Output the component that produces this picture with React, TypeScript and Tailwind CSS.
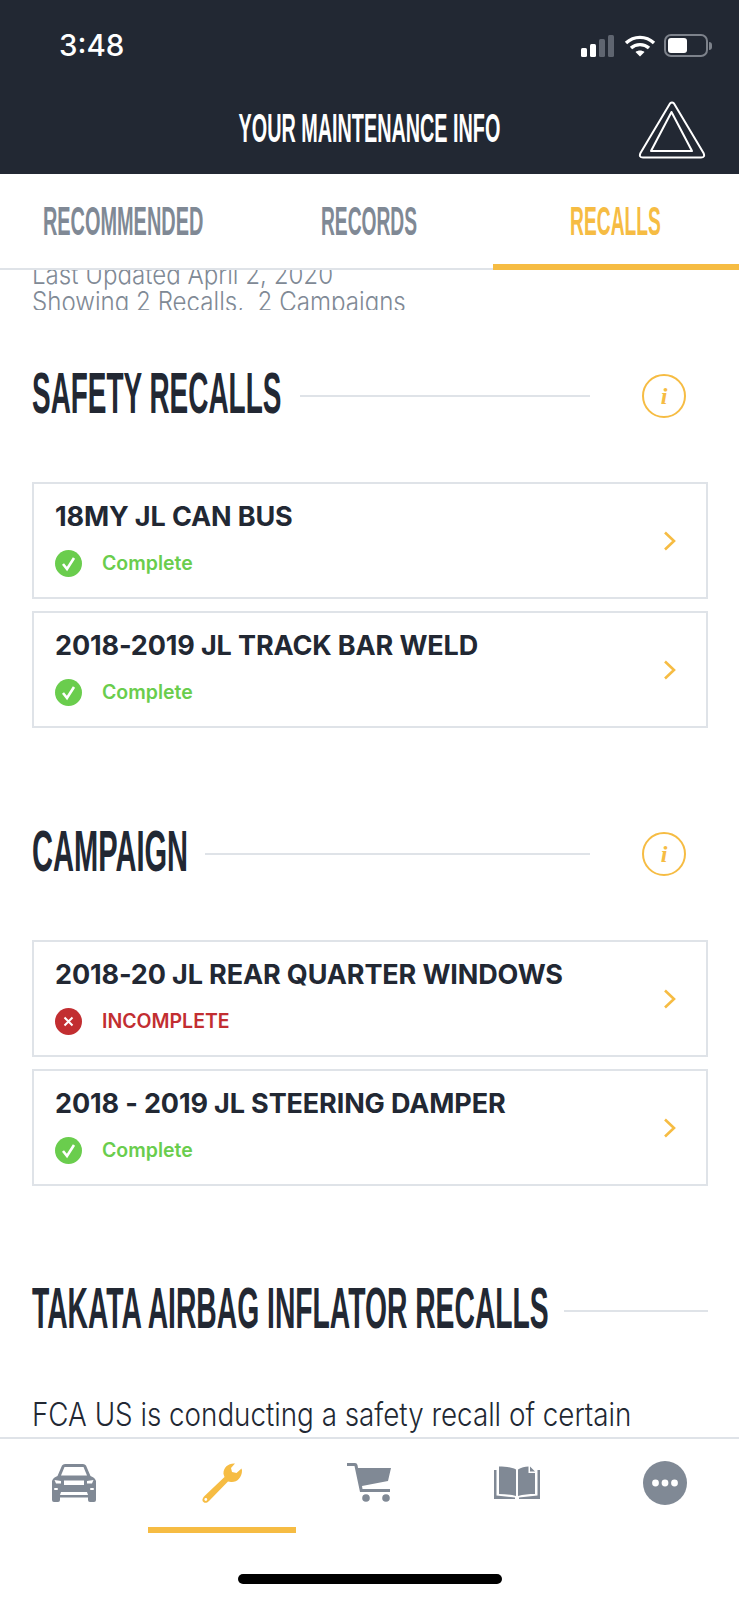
const NARROW = "font-['Liberation_Sans',sans-serif] font-bold whitespace-nowrap";

function Triangle() {
  return (
    <svg width="68" height="58" viewBox="0 0 68 58" fill="none" stroke="#fff" strokeWidth="2" strokeLinejoin="round">
      <path d="M32 2.5 Q34 0.5 36 2.5 L65.5 52 Q67.5 56.5 63 56.5 L5 56.5 Q0.5 56.5 2.5 52 Z" />
      <path d="M33.5 11 L54 50 L13 50 Z" />
    </svg>
  );
}

function StatusIcons() {
  return (
    <div className="flex items-center">
      <svg width="34" height="22" viewBox="0 0 34 22">
        <rect x="0" y="13" width="6" height="9" rx="1.5" fill="#fff" />
        <rect x="9" y="9" width="6" height="13" rx="1.5" fill="#fff" />
        <rect x="18" y="4" width="6" height="18" rx="1.5" fill="#5f6570" />
        <rect x="27" y="0" width="6" height="22" rx="1.5" fill="#5f6570" />
      </svg>
      <svg className="ml-[9px]" width="32" height="22" viewBox="0 0 32 22" fill="none" stroke="#fff" strokeWidth="3.4">
        <path d="M2 8 C10 0.5 22 0.5 30 8" />
        <path d="M7 13 C12 8.5 20 8.5 25 13" />
        <path d="M16 21.5 L11.5 17 C14 15 18 15 20.5 17 Z" fill="#fff" stroke="none" />
      </svg>
      <div className="ml-[8px] flex items-center">
        <div className="w-[44px] h-[23px] rounded-[7px] border-2 border-[#7d828b] p-[2px]">
          <div className="w-[19px] h-full rounded-[3px] bg-white" />
        </div>
        <div className="ml-[1px] w-[3px] h-[8px] rounded-r-full bg-[#7d828b]" />
      </div>
    </div>
  );
}

function InfoIcon() {
  return (
    <div className="w-[44px] h-[44px] rounded-full border-2 border-[#f6bc43] flex items-center justify-center text-[#f6bc43] font-['Liberation_Serif',serif] italic font-bold text-[24px] leading-none">
      i
    </div>
  );
}

function Check() {
  return (
    <svg width="27" height="27" viewBox="0 0 27 27">
      <circle cx="13.5" cy="13.5" r="13.5" fill="#6acd4d" />
      <path d="M8 14 L12 19 L19 8" fill="none" stroke="#fff" strokeWidth="2.6" />
    </svg>
  );
}

function Cross() {
  return (
    <svg width="27" height="27" viewBox="0 0 27 27">
      <circle cx="13.5" cy="13.5" r="13.5" fill="#c22e31" />
      <path d="M9.5 9.5 L17.5 17.5 M17.5 9.5 L9.5 17.5" fill="none" stroke="#fff" strokeWidth="2" />
    </svg>
  );
}

function Card({ title, ok }: { title: string; ok: boolean }) {
  return (
    <div className="h-[117px] border-2 border-[#dfe3e8] flex items-center justify-between pl-[21px] pr-[30px]">
      <div className="flex flex-col">
        <div className="h-[32px] leading-[32px] text-[27px] font-bold text-[#222833] font-['Inter',sans-serif] tracking-[-0.13px] whitespace-nowrap -mt-[3px]">
          {title}
        </div>
        <div className="mt-[17px] flex items-center h-[27px]">
          {ok ? <Check /> : <Cross />}
          <span
            className={
              ok
                ? "ml-[20px] text-[19.5px] font-semibold text-[#6acd4d] font-['Inter',sans-serif]"
                : "ml-[20px] text-[19.5px] font-semibold text-[#c22e31] font-['Inter',sans-serif]"
            }
          >
            {ok ? "Complete" : "INCOMPLETE"}
          </span>
        </div>
      </div>
      <svg width="13" height="20" viewBox="0 0 13 20" fill="none" stroke="#f6bc43" strokeWidth="2.6">
        <path d="M2 1.5 L11 10 L2 18.5" />
      </svg>
    </div>
  );
}

function CarIcon() {
  return (
    <svg width="44" height="38" viewBox="0 0 44 38" fill="#808995">
      <path d="M10 1.5 Q11 0 13 0 L31 0 Q33 0 34 1.5 L38.5 12 Q43 13.5 44 17 L44 36 Q44 38 42 38 L38 38 Q36 38 36 36 L36 33.5 L8 33.5 L8 36 Q8 38 6 38 L2 38 Q0 38 0 36 L0 17 Q1 13.5 5.5 12 Z" />
      <path d="M12.5 3 L31.5 3 L35 11.5 L9 11.5 Z" fill="#fff" />
      <rect x="12" y="16.5" width="20" height="4.5" fill="#fff" />
      <path d="M2.5 16 L9 17 L9 19.5 L4 19.5 Z" fill="#fff" />
      <path d="M41.5 16 L35 17 L35 19.5 L40 19.5 Z" fill="#fff" />
      <rect x="2" y="24" width="4" height="2" rx="1" fill="#fff" />
      <rect x="38" y="24" width="4" height="2" rx="1" fill="#fff" />
      <path d="M9 28 L35 28 L36 31 L8 31 Z" fill="#fff" />
    </svg>
  );
}

function WrenchIcon() {
  return (
    <svg width="40" height="40" viewBox="0 0 40 40" fill="#f6bc43">
      <path d="M33 0.5 C26 0 21 5 21.5 11 L22.5 14 L2 33.5 C0 36 0 38 1.5 39 C3 40.5 5 40 7 38 L26 18.5 L29 19 C35 19.5 40 14.5 40 7.5 L39.5 5.5 L34.5 10 L30 9 L29 5 Z" />
      <circle cx="3.8" cy="36.5" r="1.4" fill="#fff" />
    </svg>
  );
}

function CartIcon() {
  return (
    <svg width="44" height="39" viewBox="0 0 44 39" fill="#808995">
      <path d="M0 0 L8 0 Q10 0 10.5 2 L11 5 L44 5 L41 18 L15 23 L15.5 26 L43 26 L43 29 L13 29 L7.5 3 L0 3 Z" />
      <circle cx="19" cy="35" r="3.8" />
      <circle cx="39" cy="35" r="3.8" />
    </svg>
  );
}

function BookIcon() {
  return (
    <svg width="46" height="33" viewBox="0 0 46 33" fill="#808995">
      <path d="M0 4 L2.5 4 L2.5 29.5 L21 31.5 L21 33 L0 33 Z" />
      <path d="M46 4 L43.5 4 L43.5 29.5 L25 31.5 L25 33 L46 33 Z" />
      <path d="M5 0.5 C11 0.5 17 1 22 3.5 L22 30 C17 28.5 11 28 5 28 Z" />
      <path d="M24 3.5 C27 1.5 31 0.5 34.5 0.5 L34.5 7 L41 7 L41 28 C35 28 29 28.5 24 30 Z" />
      <path d="M36 0.5 L41 5.5 L36 5.5 Z" />
    </svg>
  );
}

function MoreIcon() {
  return (
    <svg width="44" height="44" viewBox="0 0 44 44">
      <circle cx="22" cy="22" r="22" fill="#808995" />
      <circle cx="12.5" cy="22" r="3.4" fill="#fff" />
      <circle cx="22" cy="22" r="3.4" fill="#fff" />
      <circle cx="31.5" cy="22" r="3.4" fill="#fff" />
    </svg>
  );
}

export default function App() {
  return (
    <div className="w-[739px] h-[1600px] bg-white flex flex-col overflow-hidden">
      <header className="h-[174px] shrink-0 bg-[#222833] flex flex-col">
        <div className="h-[102px] flex items-start justify-between pl-[59px] pr-[27px] pt-[25px]">
          <span className="text-[29.5px] leading-[40px] font-medium text-white font-['Inter',sans-serif]">3:48</span>
          <div className="pt-[9px]">
            <StatusIcons />
          </div>
        </div>
        <div className="grid grid-cols-[1fr_auto_1fr] items-start px-[33px]">
          <div />
          <div className="w-[261px] h-[46px] mt-[3px] flex items-center justify-center">
            <span className={`${NARROW} text-[40px] leading-[46px] text-white scale-x-[0.495]`}>YOUR MAINTENANCE INFO</span>
          </div>
          <div className="justify-self-end -mt-[1px]">
            <Triangle />
          </div>
        </div>
      </header>

      <nav className="h-[96px] shrink-0 grid grid-cols-3">
        <div className="border-b-2 border-[#dfe3e8] flex items-center justify-center overflow-hidden">
          <span className={`${NARROW} text-[40px] text-[#808995] scale-x-[0.498]`}>RECOMMENDED</span>
        </div>
        <div className="border-b-2 border-[#dfe3e8] flex items-center justify-center overflow-hidden">
          <span className={`${NARROW} text-[40px] text-[#808995] scale-x-[0.48]`}>RECORDS</span>
        </div>
        <div className="border-b-[6px] border-[#f6bc43] flex items-center justify-center overflow-hidden pt-[4px]">
          <span className={`${NARROW} text-[40px] text-[#f6bc43] scale-x-[0.48]`}>RECALLS</span>
        </div>
      </nav>

      <main className="flex-1 min-h-0 overflow-hidden pl-[32px] pr-[31px]">
        <div className="h-[40px] overflow-hidden">
          <div className="-mt-[9px] font-['Inter',sans-serif] font-light text-[27px] leading-[27px] text-[#808995] whitespace-nowrap origin-left scale-x-[0.893]">
            <div>Last Updated April 2, 2020</div>
            <div>Showing 2 Recalls,&nbsp; 2 Campaigns</div>
          </div>
        </div>

        <section className="mt-[56px] h-[60px] flex items-center">
          <div className="w-[251px] shrink-0">
            <div className={`${NARROW} text-[57px] leading-[60px] text-[#222833] origin-left scale-x-[0.49] -translate-y-[3px]`}>SAFETY RECALLS</div>
          </div>
          <div className="ml-[17px] flex-1 h-[2px] bg-[#dfe3e8]" />
          <div className="ml-[52px] mr-[22px]">
            <InfoIcon />
          </div>
        </section>
        <div className="mt-[56px] flex flex-col gap-[12px]">
          <Card title="18MY JL CAN BUS" ok />
          <Card title="2018-2019 JL TRACK BAR WELD" ok />
        </div>

        <section className="mt-[96px] h-[60px] flex items-center">
          <div className="w-[155px] shrink-0">
            <div className={`${NARROW} text-[57px] leading-[60px] text-[#222833] origin-left scale-x-[0.51] -translate-y-[3px]`}>CAMPAIGN</div>
          </div>
          <div className="ml-[18px] flex-1 h-[2px] bg-[#dfe3e8]" />
          <div className="ml-[52px] mr-[22px]">
            <InfoIcon />
          </div>
        </section>
        <div className="mt-[56px] flex flex-col gap-[12px]">
          <Card title="2018-20 JL REAR QUARTER WINDOWS" ok={false} />
          <Card title="2018 - 2019 JL STEERING DAMPER" ok />
        </div>

        <section className="mt-[95px] h-[60px] flex items-center">
          <div className="w-[516px] shrink-0">
            <div className={`${NARROW} text-[57px] leading-[60px] text-[#222833] origin-left scale-x-[0.496] -translate-y-[3px]`}>TAKATA AIRBAG INFLATOR RECALLS</div>
          </div>
          <div className="ml-[16px] flex-1 h-[2px] bg-[#dfe3e8]" />
        </section>
        <p className="mt-[52px] font-['Inter',sans-serif] font-light text-[32px] leading-[44px] text-[#222833] whitespace-nowrap origin-left scale-x-[0.868]">
          FCA US is conducting a safety recall of certain
        </p>
      </main>

      <footer className="h-[163px] shrink-0 border-t-2 border-[#dfe3e8]">
        <div className="h-[94px] grid grid-cols-5">
          <div className="flex justify-center items-start pt-[25px]"><CarIcon /></div>
          <div className="flex justify-center items-start pt-[24px] border-b-[6px] border-[#f6bc43]"><WrenchIcon /></div>
          <div className="flex justify-center items-start pt-[24px]"><CartIcon /></div>
          <div className="flex justify-center items-start pt-[27px]"><BookIcon /></div>
          <div className="flex justify-center items-start pt-[22px]"><MoreIcon /></div>
        </div>
        <div className="mt-[41px] mx-auto w-[264px] h-[10px] rounded-full bg-black" />
      </footer>
    </div>
  );
}
